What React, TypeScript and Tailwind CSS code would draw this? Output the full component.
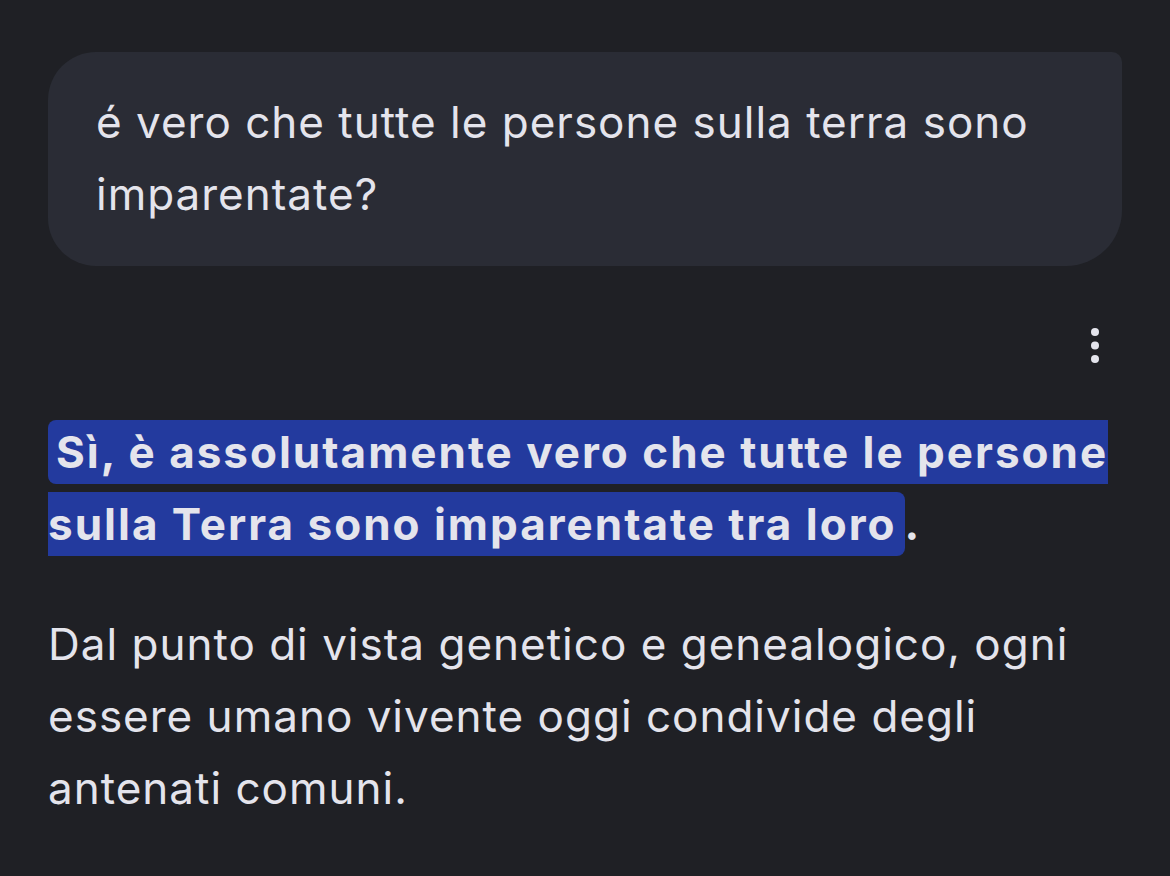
const App = () => {
  return (
    <div
      className="min-h-screen w-full bg-[#1f2025] px-12 pt-[52px] text-[#e4e4ec]"
      style={{ fontFamily: "Inter, 'Noto Sans', sans-serif" }}
    >
      {/* user message */}
      <div className="w-full bg-[#2a2c35] rounded-[48px] rounded-tr-[10px] rounded-br-[56px] px-12 pt-[34px] pb-[36px]">
        <p className="text-[44px] leading-[72px] tracking-[1px]">
          é vero che tutte le persone sulla terra sono imparentate?
        </p>
      </div>

      {/* menu */}
      <div className="mt-[55px] h-12 flex justify-end items-center pr-[23px]">
        <svg width="8" height="35" viewBox="0 0 8 35">
          <circle cx="4" cy="4" r="4" fill="#e4e4ec" />
          <circle cx="4" cy="17.5" r="4" fill="#e4e4ec" />
          <circle cx="4" cy="31" r="4" fill="#e4e4ec" />
        </svg>
      </div>

      {/* answer */}
      <p className="mt-[47px] text-[44px] leading-[72px] font-bold tracking-[2px]">
        <span className="bg-[#233a9e] rounded-lg pl-2 pr-2 py-[5px]">
          Sì, è assolutamente vero che tutte le persone sulla Terra sono imparentate tra loro
        </span>
        .
      </p>

      <p className="mt-12 text-[44px] leading-[72px] tracking-[1px]">
        Dal punto di vista genetico e genealogico, ogni essere umano vivente oggi condivide degli antenati comuni.
      </p>
    </div>
  )
}

export default App
